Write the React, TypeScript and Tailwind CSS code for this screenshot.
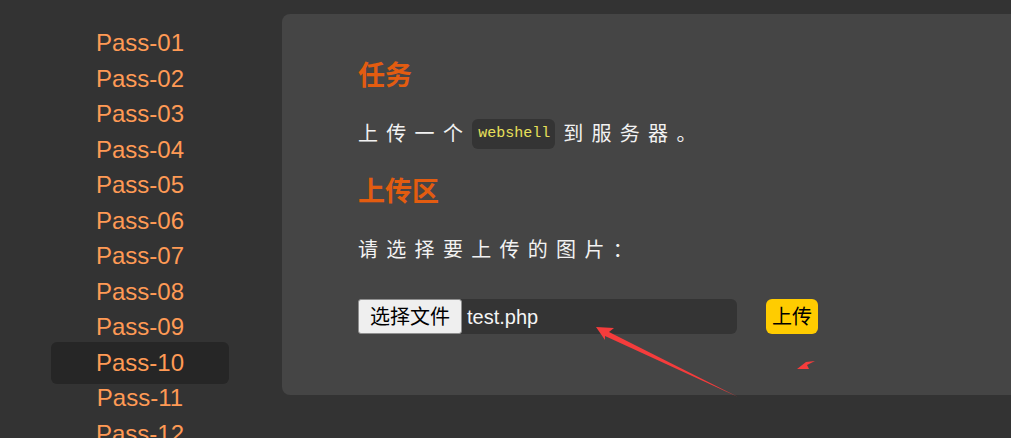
const passes = Array.from({ length: 12 }, (_, i) => `Pass-${String(i + 1).padStart(2, "0")}`);

const cjk = "font-['Liberation_Sans','Noto_Sans_CJK_SC',sans-serif]";

export default function App() {
  return (
    <div className="relative flex h-[438px] w-[1011px] overflow-hidden bg-[#333333]">
      {/* Sidebar */}
      <nav className="flex w-[282px] shrink-0 flex-col pt-[25.5px] font-['Liberation_Sans',Arial,sans-serif]">
        {passes.map((p) => {
          const active = p === "Pass-10";
          return (
            <a
              key={p}
              href="#"
              className={
                active
                  ? "relative z-0 ml-[51px] -my-[3.25px] flex h-[42px] w-[178px] shrink-0 items-center justify-center rounded-md bg-[#262626] text-[24px] leading-none text-[#ff9a55]"
                  : "ml-[51px] flex h-[35.5px] w-[178px] shrink-0 items-center justify-center text-[24px] leading-none text-[#ff9a55]"
              }
            >
              {p}
            </a>
          );
        })}
      </nav>

      {/* Main panel */}
      <main className={`mt-[14px] h-[381px] flex-1 rounded-l-lg bg-[#454545] pl-[76px] pt-[42px] ${cjk}`}>
        <h3 className="flex h-[40px] items-center text-[27px] font-bold text-[#e35c10]">任务</h3>

        <p className="mt-[18px] flex h-[40px] items-center text-[20px] tracking-[8.3px] text-[#f2f2f2]">
          上传一个
          <code className="ml-[1px] mr-[8px] inline-flex h-[30px] items-center rounded-md bg-[#343434] pl-[6px] pr-[5px] font-['Liberation_Mono',monospace] text-[15px] tracking-normal text-[#e8e05a]">
            webshell
          </code>
          到服务器。
        </p>

        <h3 className="mt-[18px] flex h-[40px] items-center text-[27px] font-bold text-[#e35c10]">上传区</h3>

        <p className="mt-[18px] flex h-[40px] items-center text-[20px] tracking-[8.3px] text-[#f2f2f2]">
          请选择要上传的图片：
        </p>

        <form className="mt-[29px] flex items-center">
          <div className="flex h-[35px] w-[379px] items-center rounded-md bg-[#343434]">
            <span className="flex h-full items-center rounded-[3px] border border-[#8f8f8f] bg-[#efefef] px-[11px] text-[20px] leading-none text-black">
              选择文件
            </span>
            <span className="ml-[5px] text-[20px] leading-none text-[#f5f5f5]">test.php</span>
          </div>
          <button
            type="button"
            className="ml-[29px] flex h-[35px] items-center rounded-md bg-[#ffcc00] px-[6px] text-[20px] leading-none text-black"
          >
            上传
          </button>
        </form>
      </main>

      {/* Red annotation arrows */}
      <svg
        className="pointer-events-none absolute left-0 top-0"
        width="1011"
        height="438"
        viewBox="0 0 1011 438"
      >
        <polygon
          points="596,327 614,328 609,332 738,397 605,336 605,340"
          fill="#f53c3c"
        />
        <polygon points="797,369 806,362 815,361 807,365 809,369" fill="#f53c3c" />
      </svg>
    </div>
  );
}
